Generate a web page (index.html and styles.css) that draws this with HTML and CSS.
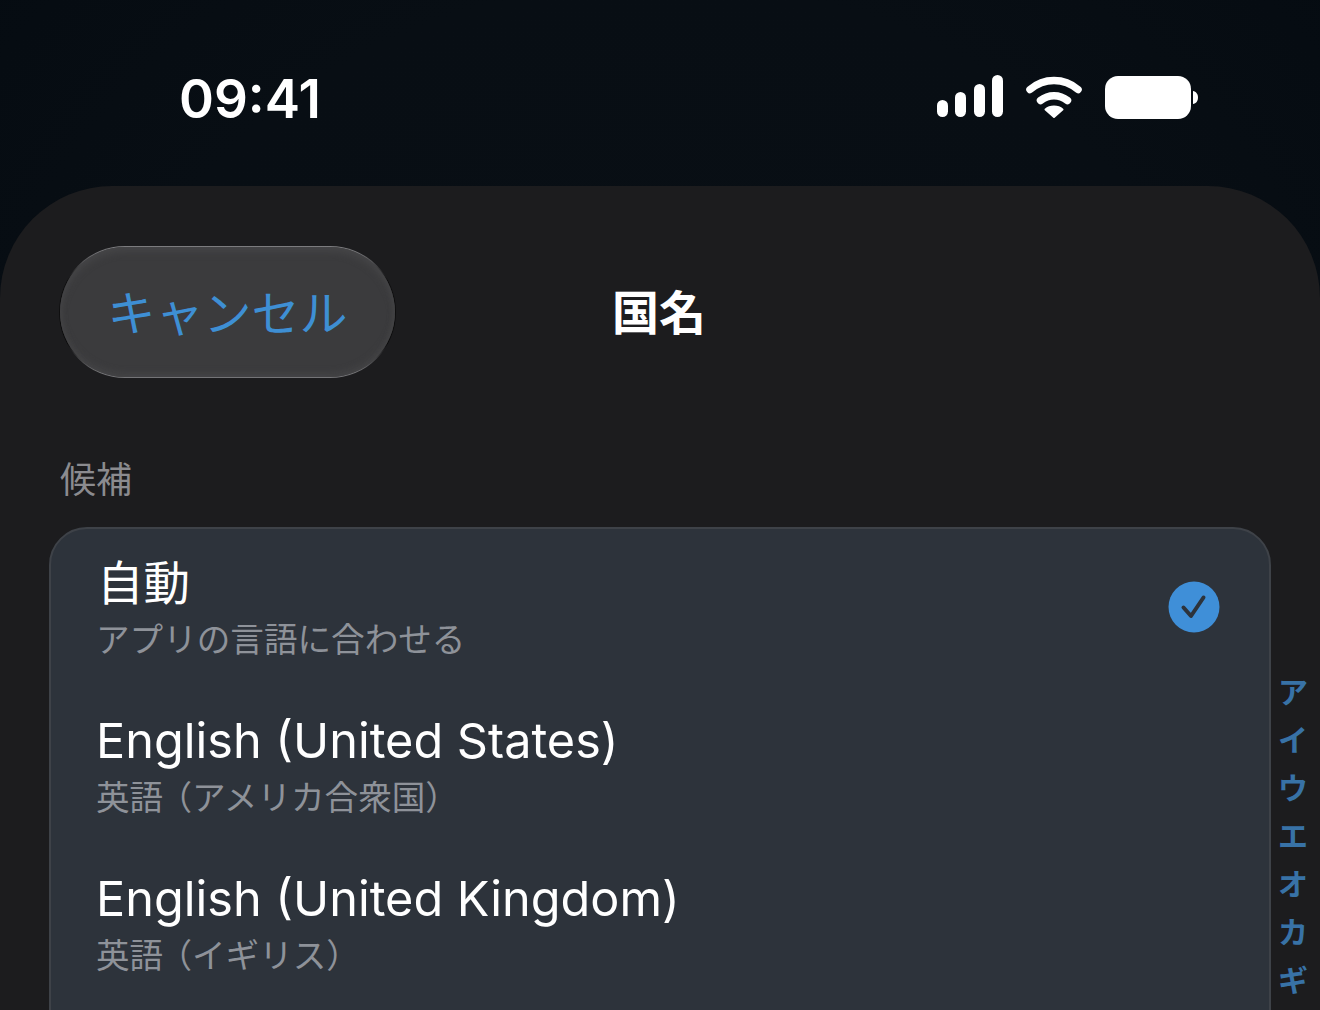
FILE: index.html
```html
<!DOCTYPE html>
<html lang="ja">
<head>
<meta charset="utf-8">
<title>国名</title>
<link rel="stylesheet" href="styles.css">
</head>
<body>
<div class="screen">
  <header class="status">
    <span class="time">09:41</span>
    <div class="status-icons">
      <svg class="signal" width="66" height="42" viewBox="0 0 66 42"><rect x="0" y="25" width="11" height="17" rx="5.5"/><rect x="18" y="17" width="11" height="25" rx="5.5"/><rect x="37" y="9" width="11" height="33" rx="5.5"/><rect x="55" y="0" width="11" height="42" rx="5.5"/></svg>
      <svg class="wifi" width="58" height="44" viewBox="0 0 58 44"><path d="M5 14.5C19 2.500 39 2.500 53 14.5" class="arc"/><path d="M15.500 25.500C23.500 19 34.500 19 42.500 25.500" class="arc"/><path d="M29 42L20.500 34.500C25 30.500 33 30.500 37.500 34.500Z" class="dot"/></svg>
      <svg class="battery" width="94" height="44" viewBox="0 0 94 44"><rect x="0" y="0" width="86" height="43" rx="13"/><path d="M88 15C91 15.500 93 18 93 21.500C93 25 91 27.500 88 28Z"/></svg>
    </div>
  </header>
  <main class="sheet">
    <nav class="nav">
      <button class="cancel">キャンセル</button>
      <h1 class="title">国名</h1>
    </nav>
    <div class="section-label">候補</div>
    <div class="content">
      <ul class="card">
        <li class="row">
          <div class="row-text"><div class="row-title cjk">自動</div><div class="row-sub">アプリの言語に合わせる</div></div>
          <svg class="check" width="52" height="52" viewBox="0 0 52 52"><circle cx="26" cy="26" r="25.500"/><path d="M15.500 26.500L23 35L35.500 16.500"/></svg>
        </li>
        <li class="row">
          <div class="row-text"><div class="row-title">English (United States)</div><div class="row-sub">英語<span class="paren">（</span>アメリカ合衆国）</div></div>
        </li>
        <li class="row">
          <div class="row-text"><div class="row-title">English (United Kingdom)</div><div class="row-sub">英語<span class="paren">（</span>イギリス）</div></div>
        </li>
      </ul>
      <div class="index">
        <span>ア</span><span>イ</span><span>ウ</span><span>エ</span><span>オ</span><span>カ</span><span>ギ</span>
      </div>
    </div>
  </main>
</div>
</body>
</html>
```
FILE: styles.css
```css
* { box-sizing: border-box; }
html, body { margin: 0; padding: 0; }
body {
  width: 1320px;
  height: 1010px;
  overflow: hidden;
  background: radial-gradient(ellipse at 50% 45%, #090f15 0%, #080e14 60%, #050b11 100%);
  font-family: Inter, "Noto Sans CJK JP", sans-serif;
  color: #fff;
}
.screen { height: 1010px; display: flex; flex-direction: column; overflow: hidden; }
.status {
  height: 186px;
  flex: none;
  display: flex;
  justify-content: space-between;
  padding: 66px 121px 0 179px;
}
.time { font-size: 53px; line-height: 66px; font-weight: 600; }
.status-icons { display: flex; align-items: flex-start; padding-top: 9px; gap: 22px; }
.status-icons svg { display: block; fill: #fff; }
.battery { margin-top: 1px; }
.wifi .arc { fill: none; stroke: #fff; stroke-width: 7.500; stroke-linecap: round; }
.wifi .dot { stroke: #fff; stroke-width: 2; stroke-linejoin: round; }
.sheet {
  flex: 1;
  background: #1c1c1e;
  border-radius: 112px 112px 0 0;
  padding: 60px 49px 0;
}
.nav { position: relative; height: 132px; display: flex; align-items: center; justify-content: center; }
.cancel {
  position: absolute;
  left: 10px;
  top: 0;
  width: 337px;
  height: 132px;
  border-radius: 66px;
  border: 1.500px solid transparent;
  background:
    linear-gradient(#3b3b3d, #3b3b3d) padding-box,
    linear-gradient(180deg, #7c7c7f 0%, #77777a 4%, #101011 26%, #0c0c0d 74%, #747477 96%, #747477 100%) border-box;
  box-shadow: inset 0 5px 7px #454547, inset 0 -4px 6px #444446;
  color: #3e8fd4;
  font: 400 48px/1 Inter, "Noto Sans CJK JP", sans-serif;
  padding: 4px 0 0;
}
.title { margin: 0; font-size: 47px; font-weight: 700; line-height: 1; transform: translateX(-1px); }
.section-label { margin: 80px 0 0 11px; font-size: 36px; line-height: 44px; color: #8b8b8f; height: 69px; }
.content { display: flex; gap: 8px; }
.card {
  list-style: none;
  margin: 0;
  padding: 0;
  width: 1222px;
  height: 560px;
  flex: none;
  background: #2d333b;
  border: 2px solid #3e4248;
  border-radius: 38px;
}
.row { height: 158px; display: flex; align-items: center; justify-content: space-between; padding: 0 49px 2px 45px; }
.row-title { font-size: 48.600px; line-height: 62px; color: #fff; }
.row-title.cjk { font-size: 46.500px; margin-left: 1px; }
.row-sub { font-size: 33.600px; line-height: 46px; margin-top: 3px; color: #8e9299; }
.paren { font-feature-settings: "halt"; padding-left: 12px; }
.index {
  display: flex;
  flex-direction: column;
  align-items: center;
  padding-top: 141px;
  width: 30px;
  margin-left: -1px;
}
.index span { height: 48px; font-size: 30px; line-height: 48px; font-weight: 700; color: #3872a6; }
.check circle { fill: #3f8fd8; }
.check path { fill: none; stroke: #2d333b; stroke-width: 4; stroke-linecap: round; stroke-linejoin: round; }
```
